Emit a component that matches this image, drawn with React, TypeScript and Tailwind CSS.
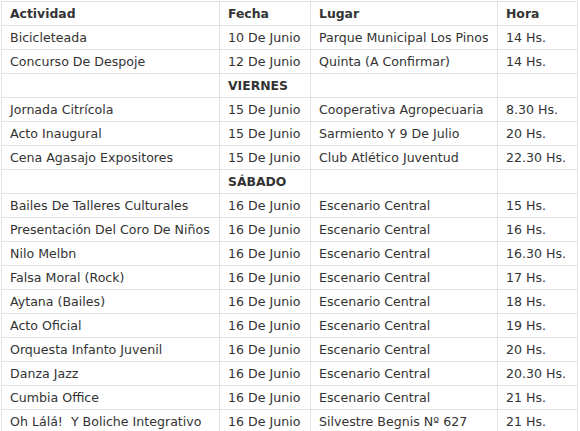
type Row = { actividad?: string; fecha?: string; lugar?: string; hora?: string; dia?: string };

const rows: Row[] = [
  { actividad: "Bicicleteada", fecha: "10 De Junio", lugar: "Parque Municipal Los Pinos", hora: "14 Hs." },
  { actividad: "Concurso De Despoje", fecha: "12 De Junio", lugar: "Quinta (A Confirmar)", hora: "14 Hs." },
  { dia: "VIERNES" },
  { actividad: "Jornada Citrícola", fecha: "15 De Junio", lugar: "Cooperativa Agropecuaria", hora: "8.30 Hs." },
  { actividad: "Acto Inaugural", fecha: "15 De Junio", lugar: "Sarmiento Y 9 De Julio", hora: "20 Hs." },
  { actividad: "Cena Agasajo Expositores", fecha: "15 De Junio", lugar: "Club Atlético Juventud", hora: "22.30 Hs." },
  { dia: "SÁBADO" },
  { actividad: "Bailes De Talleres Culturales", fecha: "16 De Junio", lugar: "Escenario Central", hora: "15 Hs." },
  { actividad: "Presentación Del Coro De Niños", fecha: "16 De Junio", lugar: "Escenario Central", hora: "16 Hs." },
  { actividad: "Nilo Melbn", fecha: "16 De Junio", lugar: "Escenario Central", hora: "16.30 Hs." },
  { actividad: "Falsa Moral (Rock)", fecha: "16 De Junio", lugar: "Escenario Central", hora: "17 Hs." },
  { actividad: "Aytana (Bailes)", fecha: "16 De Junio", lugar: "Escenario Central", hora: "18 Hs." },
  { actividad: "Acto Oficial", fecha: "16 De Junio", lugar: "Escenario Central", hora: "19 Hs." },
  { actividad: "Orquesta Infanto Juvenil", fecha: "16 De Junio", lugar: "Escenario Central", hora: "20 Hs." },
  { actividad: "Danza Jazz", fecha: "16 De Junio", lugar: "Escenario Central", hora: "20.30 Hs." },
  { actividad: "Cumbia Office", fecha: "16 De Junio", lugar: "Escenario Central", hora: "21 Hs." },
  { actividad: "Oh Lálá!  Y Boliche Integrativo", fecha: "16 De Junio", lugar: "Silvestre Begnis Nº 627", hora: "21 Hs." },
];

const cell = "border border-[#e2e2e2] h-[24px] px-[8px] pt-[2px] pb-0 whitespace-pre align-middle overflow-hidden";

export default function App() {
  return (
    <div className="bg-white w-[580px] h-[431px] overflow-hidden font-['DejaVu_Sans',Verdana,sans-serif] text-[12.6px] text-[#333]">
      <table className="table-fixed border-collapse w-[576px] ml-[1px] mt-[1px]">
        <colgroup>
          <col className="w-[218px]" />
          <col className="w-[91px]" />
          <col className="w-[187px]" />
          <col className="w-[80px]" />
        </colgroup>
        <thead>
          <tr className="font-bold text-[12.4px]">
            <th className={cell + " text-left"}>Actividad</th>
            <th className={cell + " text-left"}>Fecha</th>
            <th className={cell + " text-left"}>Lugar</th>
            <th className={cell + " text-left"}>Hora</th>
          </tr>
        </thead>
        <tbody>
          {rows.map((r, i) =>
            r.dia ? (
              <tr key={i}>
                <td className={cell}></td>
                <td className={cell + " font-bold text-[12.4px]"}>{r.dia}</td>
                <td className={cell}></td>
                <td className={cell}></td>
              </tr>
            ) : (
              <tr key={i}>
                <td className={cell}>{r.actividad}</td>
                <td className={cell}>{r.fecha}</td>
                <td className={cell}>{r.lugar}</td>
                <td className={cell}>{r.hora}</td>
              </tr>
            )
          )}
        </tbody>
      </table>
    </div>
  );
}
